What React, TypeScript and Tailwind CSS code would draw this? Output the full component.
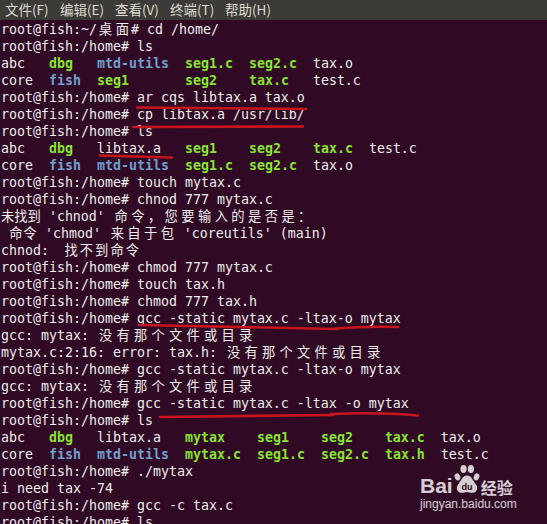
import React from "react";

const PROMPT = "root@fish:/home# ";
const GRN = "font-bold text-[#8ae234]";
const BLU = "font-bold text-[#729fcf]";

const wide = /[\u2e80-\u9fff\u3000-\u303f\uff00-\uffef]/;

// terminal draws CJK glyphs in wider cells than the font gives them
function Cjk({ text, w = "w-[16.7px]" }: { text: string; w?: string }) {
  const out: React.ReactNode[] = [];
  let buf = "";
  [...text].forEach((ch, i) => {
    if (wide.test(ch)) {
      if (buf) {
        out.push(<React.Fragment key={"b" + i}>{buf}</React.Fragment>);
        buf = "";
      }
      out.push(
        <span
          key={i}
          className={`inline-block align-top h-[17px] leading-[15px] text-center font-['Noto_Sans_CJK_SC',sans-serif] ${w}`}
        >
          {ch}
        </span>
      );
    } else buf += ch;
  });
  if (buf) out.push(<React.Fragment key="end">{buf}</React.Fragment>);
  return <>{out}</>;
}

type Item = [string, string?];

function Ls({ items, widths }: { items: Item[]; widths: number[] }) {
  return (
    <div>
      {items.map(([name, cls], i) => (
        <span key={i} className={cls}>
          {name}
          {" ".repeat(Math.max(0, (widths[i] ?? name.length) - name.length))}
        </span>
      ))}
    </div>
  );
}

function Menu() {
  const items = ["文件(F)", "编辑(E)", "查看(V)", "终端(T)", "帮助(H)"];
  return (
    <div className="h-[20px] bg-[#3c3b37] flex items-center pl-[5px] text-[13.5px] text-[#dfdbd2] font-['Noto_Sans_CJK_SC',sans-serif]">
      {items.map((m) => (
        <span key={m} className="w-[55px] leading-none">
          {m}
        </span>
      ))}
    </div>
  );
}

function Underlines() {
  return (
    <svg className="absolute left-0 top-0 pointer-events-none" width="547" height="524">
      <g stroke="#c8141c" strokeWidth="2.6" strokeLinecap="round" fill="none">
        <path d="M137 107.5 L306 109" />
        <path d="M133 127 L303 126.5" />
        <path d="M100 155.5 L172 157.5" />
        <path d="M140 325 Q240 327 337 329" />
        <path d="M336 328.5 Q370 326 398 327" />
        <path d="M160 417 Q250 416 333 415" />
        <path d="M331 414 Q380 412 418 415.5" />
      </g>
    </svg>
  );
}

function Watermark() {
  return (
    <div className="absolute left-[420px] top-[464px] flex flex-col text-white/80">
      <div className="flex items-end">
        <span className="text-[21px] leading-[16px] font-bold font-['Liberation_Sans',sans-serif]">Bai</span>
        <svg width="26" height="30" viewBox="0 0 30 34" className="mx-[1px]">
          <g fill="currentColor">
            <ellipse cx="4" cy="14.5" rx="3.2" ry="4.2" transform="rotate(-20 4 14.5)" />
            <ellipse cx="11" cy="5.5" rx="3.6" ry="4.6" />
            <ellipse cx="19.5" cy="5.5" rx="3.6" ry="4.6" />
            <ellipse cx="26" cy="14.5" rx="3.2" ry="4.2" transform="rotate(20 26 14.5)" />
            <path d="M15 13 C10 13 8 19 5 23 C1.5 27 3.5 33 9 33 C12 33 13 32 15 32 C17 32 18 33 21 33 C26.5 33 28.5 27 25 23 C22 19 20 13 15 13 Z" />
          </g>
          <text
            x="15"
            y="30"
            textAnchor="middle"
            fontSize="10.5"
            fontWeight="bold"
            fontFamily="Liberation Sans, sans-serif"
            fill="#300a24"
          >
            du
          </text>
        </svg>
        <span className="text-[16px] leading-[14px] font-bold font-['Noto_Sans_CJK_SC',sans-serif]">经验</span>
      </div>
      <span className="text-[12px] leading-[14px] mt-[3px] font-['Liberation_Sans',sans-serif]">jingyan.baidu.com</span>
    </div>
  );
}

export default function App() {
  const lsA: Item[][] = [
    [["abc"], ["dbg", GRN], ["mtd-utils", BLU], ["seg1.c", GRN], ["seg2.c", GRN], ["tax.o"]],
    [["core"], ["fish", BLU], ["seg1", GRN], ["seg2", GRN], ["tax.c", GRN], ["test.c"]],
  ];
  const lsB: Item[][] = [
    [["abc"], ["dbg", GRN], ["libtax.a"], ["seg1", GRN], ["seg2", GRN], ["tax.c", GRN], ["test.c"]],
    [["core"], ["fish", BLU], ["mtd-utils", BLU], ["seg1.c", GRN], ["seg2.c", GRN], ["tax.o"]],
  ];
  const lsC: Item[][] = [
    [["abc"], ["dbg", GRN], ["libtax.a"], ["mytax", GRN], ["seg1", GRN], ["seg2", GRN], ["tax.c", GRN], ["tax.o"]],
    [["core"], ["fish", BLU], ["mtd-utils", BLU], ["mytax.c", GRN], ["seg1.c", GRN], ["seg2.c", GRN], ["tax.h", GRN], ["test.c"]],
  ];

  return (
    <div className="relative w-[547px] h-[524px] overflow-hidden bg-[#300a24]">
      <Menu />
      <div className="pt-[1px] pl-[1px] whitespace-pre text-[13.29px] leading-[17px] text-[#eeeeec] font-['DejaVu_Sans_Mono','Noto_Sans_CJK_SC',monospace]">
        <div>
          root@fish:~/<Cjk text="桌面" w="w-[17px]" /># cd /home/
        </div>
        <div>{PROMPT}ls</div>
        {lsA.map((r, i) => (
          <Ls key={"a" + i} items={r} widths={[6, 6, 11, 8, 8, 7]} />
        ))}
        <div>{PROMPT}ar cqs libtax.a tax.o</div>
        <div>{PROMPT}cp libtax.a /usr/lib/</div>
        <div>{PROMPT}ls</div>
        {lsB.map((r, i) => (
          <Ls key={"b" + i} items={r} widths={[6, 6, 11, 8, 8, 7]} />
        ))}
        <div>{PROMPT}touch mytax.c</div>
        <div>{PROMPT}chnod 777 mytax.c</div>
        <div>
          <Cjk text="未找到" w="w-[13.3px]" /> 'chnod' <Cjk text="命令，您要输入的是否是：" />
        </div>
        <div>
          {" "}
          <Cjk text="命令" w="w-[14px]" /> 'chmod' <Cjk text="来自于包" /> 'coreutils' (main)
        </div>
        <div>
          chnod:<span className="inline-block align-top h-[17px] w-[14.5px]" />
          <Cjk text="找不到命令" w="w-[15.3px]" />
        </div>
        <div>{PROMPT}chmod 777 mytax.c</div>
        <div>{PROMPT}touch tax.h</div>
        <div>{PROMPT}chmod 777 tax.h</div>
        <div>{PROMPT}gcc -static mytax.c -ltax-o mytax</div>
        <div>
          gcc: mytax: <Cjk text="没有那个文件或目录" w="w-[17.5px]" />
        </div>
        <div>
          mytax.c:2:16: error: tax.h: <Cjk text="没有那个文件或目录" w="w-[17.5px]" />
        </div>
        <div>{PROMPT}gcc -static mytax.c -ltax-o mytax</div>
        <div>
          gcc: mytax: <Cjk text="没有那个文件或目录" w="w-[17.5px]" />
        </div>
        <div>{PROMPT}gcc -static mytax.c -ltax -o mytax</div>
        <div>{PROMPT}ls</div>
        {lsC.map((r, i) => (
          <Ls key={"c" + i} items={r} widths={[6, 6, 11, 9, 8, 8, 7]} />
        ))}
        <div>{PROMPT}./mytax</div>
        <div>i need tax -74</div>
        <div>{PROMPT}gcc -c tax.c</div>
        <div>{PROMPT}ls</div>
      </div>
      <Underlines />
      <Watermark />
    </div>
  );
}
